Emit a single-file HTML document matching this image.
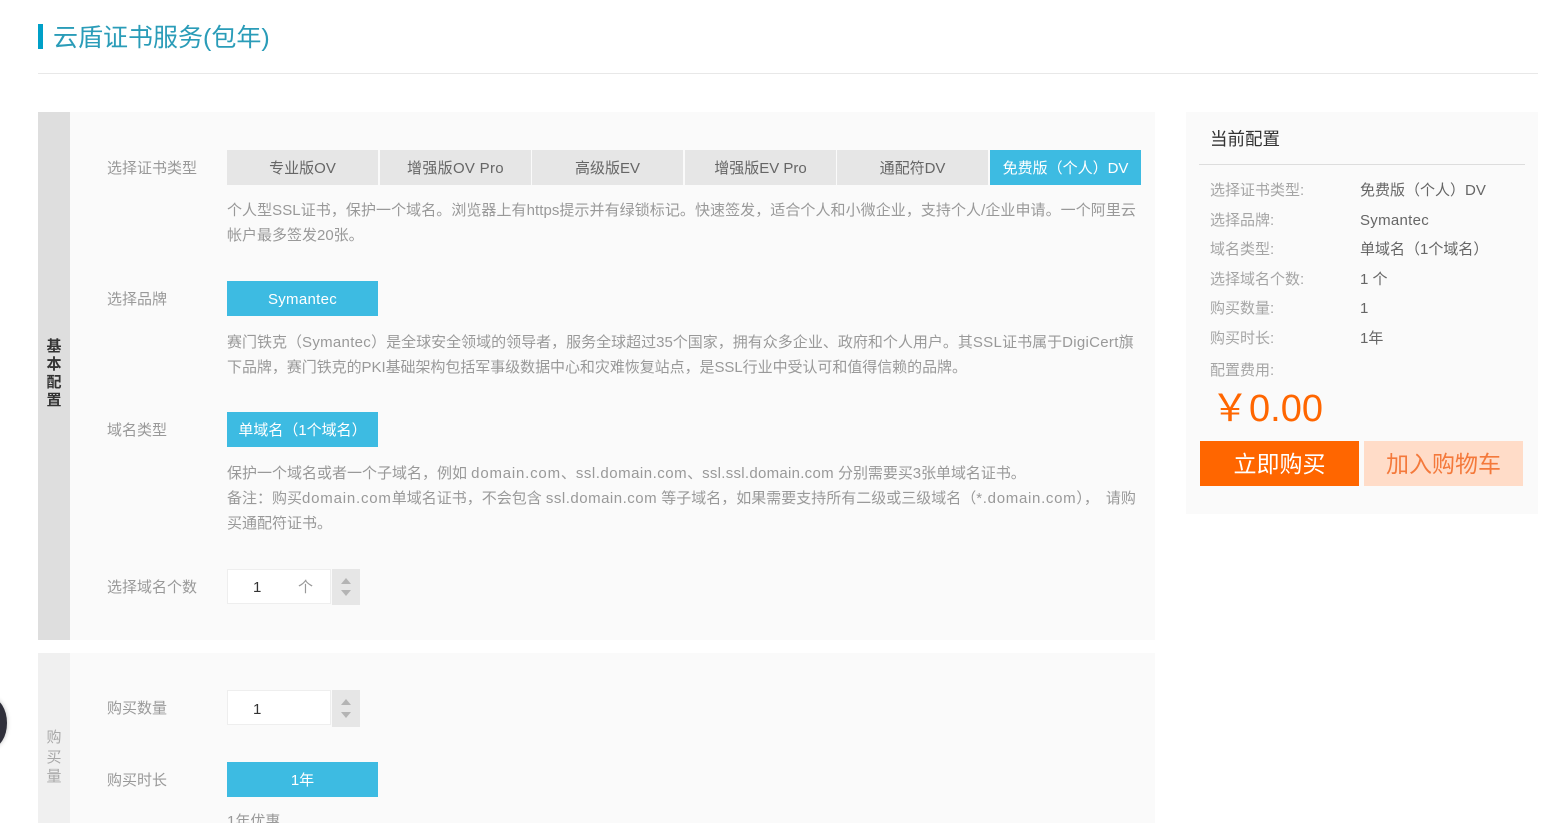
<!DOCTYPE html>
<html lang="zh-CN"><head><meta charset="utf-8"><title>云盾证书服务</title>
<style>
html,body{margin:0;padding:0;background:#fff}
#p{position:relative;width:1567px;height:823px;overflow:hidden;background:#fff;font-family:"Liberation Sans","Noto Sans CJK SC",sans-serif;font-size:15px;color:#999}
#p div{position:absolute;box-sizing:border-box}
.t{white-space:nowrap;line-height:20px;height:20px}
.l{color:#999;left:107px}
.d{color:#999;left:227px}
.b{height:35px;width:151px;line-height:37px;text-align:center;background:#e6e6e6;color:#666;white-space:nowrap;top:150px}
.a{background:#3dbbe2;color:#fff}
.k{left:1210px;color:#a5a5a5}
.v{left:1360px;color:#666}
.w8{letter-spacing:.8px}.w5{letter-spacing:.5px}.w3{letter-spacing:.3px}
</style></head><body><div id="p">
<div style="left:38px;top:24px;width:5px;height:25px;background:#00a0c8"></div>
<div class="t" style="left:53px;top:23px;height:30px;line-height:30px;font-size:25px;color:#2a9cb8">云盾证书服务(包年)</div>
<div style="left:38px;top:73px;width:1500px;height:1px;background:#e8e8e8"></div>

<div style="left:38px;top:112px;width:1117px;height:528px;background:#fafafa"></div>
<div style="left:38px;top:112px;width:32px;height:528px;background:#dedede"></div>
<div style="left:38px;top:338px;width:32px;text-align:center;line-height:18px;color:#333;font-weight:bold">基<br>本<br>配<br>置</div>

<div style="left:38px;top:653px;width:1117px;height:170px;background:#fafafa"></div>
<div style="left:38px;top:653px;width:32px;height:170px;background:#f0f0f0"></div>
<div style="left:38px;top:728px;width:32px;text-align:center;line-height:19.5px;color:#a8a8a8">购<br>买<br>量</div>

<div style="left:-25px;top:698px;width:32px;height:50px;border-radius:50%;background:#2f2f3a;box-shadow:0 0 5px rgba(0,0,0,.25)"></div>

<div class="t l" style="top:159px">选择证书类型</div>
<div class="b" style="left:227px">专业版OV</div>
<div class="b" style="left:380px"><span class="w3">增强版OV Pro</span></div>
<div class="b" style="left:532px">高级版EV</div>
<div class="b" style="left:685px">增强版EV Pro</div>
<div class="b" style="left:837px">通配符DV</div>
<div class="b a" style="left:990px">免费版（个人）DV</div>
<div class="t d" style="top:201px;letter-spacing:.06px">个人型SSL证书，保护一个域名。浏览器上有https提示并有绿锁标记。快速签发，适合个人和小微企业，支持个人/企业申请。一个阿里云</div>
<div class="t d" style="top:226px">帐户最多签发20张。</div>

<div class="t l" style="top:290px">选择品牌</div>
<div class="b a" style="left:227px;top:281px"><span class="w3">Symantec</span></div>
<div class="t d" style="top:333px">赛门铁克（<span class="w3">Symantec</span>）是全球安全领域的领导者，服务全球超过35个国家，拥有众多企业、政府和个人用户。其<span class="w3">SSL</span>证书属于<span class="w3">DigiCert</span>旗</div>
<div class="t d" style="top:358px;letter-spacing:-.05px">下品牌，赛门铁克的PKI基础架构包括军事级数据中心和灾难恢复站点，是SSL行业中受认可和值得信赖的品牌。</div>

<div class="t l" style="top:421px">域名类型</div>
<div class="b a" style="left:227px;top:412px">单域名（1个域名）</div>
<div class="t d" style="top:464px">保护一个域名或者一个子域名，例如 <span class="w8">domain.com</span>、<span class="w5">ssl.domain.com</span>、<span style="letter-spacing:.28px">ssl.ssl.domain.com</span> <span style="letter-spacing:-.05px">分别需要买3张单域名证书。</span></div>
<div class="t d" style="top:489px">备注：购买<span class="w8">domain.com</span>单域名证书，不会包含 <span class="w5">ssl.domain.com</span> 等子域名，如果需要支持所有二级或三级域名（<span style="letter-spacing:.7px">*.domain.com</span>），<span style="margin-left:7px">请购</span></div>
<div class="t d" style="top:514px">买通配符证书。</div>

<div class="t l" style="top:578px">选择域名个数</div>
<div style="left:227px;top:569px;width:104px;height:35px;background:#fff;border:1px solid #eee"></div>
<div class="t" style="left:253px;top:578px;color:#333">1</div>
<div class="t" style="left:298px;top:578px;color:#999">个</div>
<div style="left:332px;top:569px;width:28px;height:36px;background:#e6e6e6"></div>
<div style="left:341px;top:578px;width:0;height:0;border:5.5px solid transparent;border-top:0;border-bottom:6px solid #b4b4b4"></div>
<div style="left:341px;top:590px;width:0;height:0;border:5.5px solid transparent;border-bottom:0;border-top:6px solid #b4b4b4"></div>

<div class="t l" style="top:699px">购买数量</div>
<div style="left:227px;top:690px;width:104px;height:35px;background:#fff;border:1px solid #eee"></div>
<div class="t" style="left:253px;top:700px;color:#333">1</div>
<div style="left:332px;top:690px;width:28px;height:37px;background:#e6e6e6"></div>
<div style="left:341px;top:699px;width:0;height:0;border:5.5px solid transparent;border-top:0;border-bottom:6px solid #b4b4b4"></div>
<div style="left:341px;top:712px;width:0;height:0;border:5.5px solid transparent;border-bottom:0;border-top:6px solid #b4b4b4"></div>

<div class="t l" style="top:771px">购买时长</div>
<div class="b a" style="left:227px;top:762px">1年</div>
<div class="t d" style="top:812px">1年优惠</div>

<div style="left:1186px;top:112px;width:352px;height:402px;background:#fafafa"></div>
<div class="t" style="left:1210px;top:128px;height:22px;line-height:22px;font-size:17.5px;color:#333">当前配置</div>
<div style="left:1199px;top:164px;width:326px;height:1px;background:#ddd"></div>

<div class="t k" style="top:181px">选择证书类型:</div><div class="t v" style="top:181px">免费版（个人）DV</div>
<div class="t k" style="top:211px">选择品牌:</div><div class="t v" style="top:211px"><span class="w3">Symantec</span></div>
<div class="t k" style="top:240px">域名类型:</div><div class="t v" style="top:240px">单域名（1个域名）</div>
<div class="t k" style="top:270px">选择域名个数:</div><div class="t v" style="top:270px">1 个</div>
<div class="t k" style="top:299px">购买数量:</div><div class="t v" style="top:299px">1</div>
<div class="t k" style="top:329px">购买时长:</div><div class="t v" style="top:329px">1年</div>
<div class="t k" style="top:361px">配置费用:</div>
<div class="t" style="left:1211px;top:384px;height:50px;line-height:50px;font-size:38px;color:#ff6600">￥0.00</div>

<div style="left:1200px;top:441px;width:159px;height:45px;line-height:46px;text-align:center;font-size:23px;background:#ff6600;color:#fff">立即购买</div>
<div style="left:1364px;top:441px;width:159px;height:45px;line-height:46px;text-align:center;font-size:23px;background:#ffdcc8;color:#f4793b">加入购物车</div>
</div></body></html>
